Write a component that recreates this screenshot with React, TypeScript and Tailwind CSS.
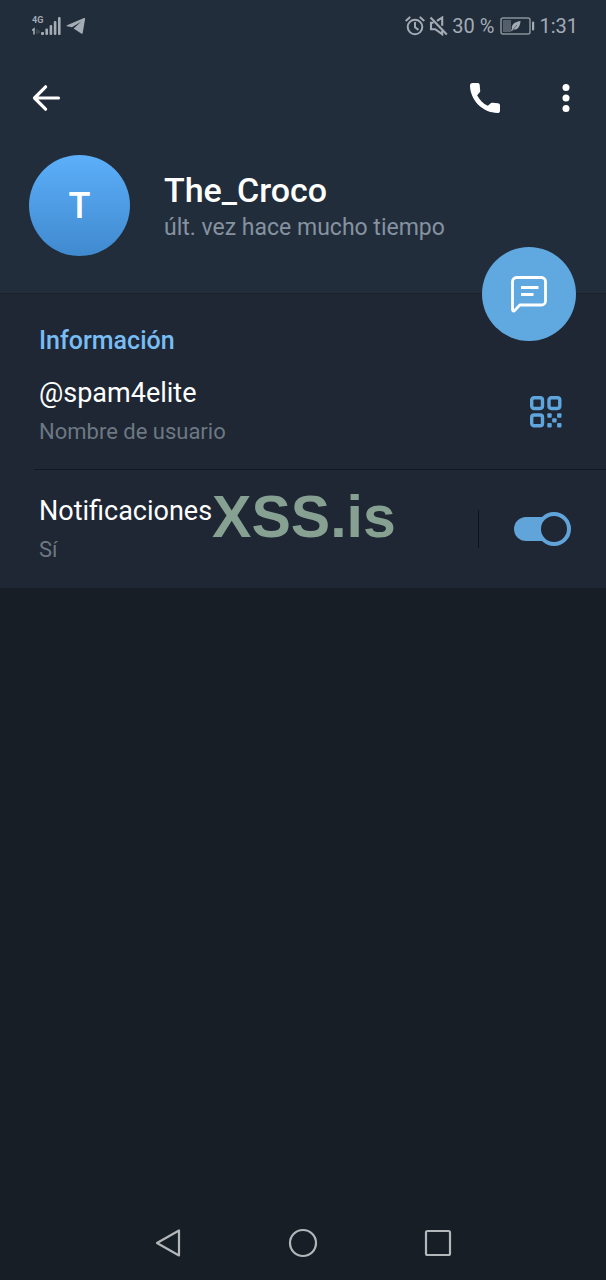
import React, { useState } from "react";

/* ------------------------------------------------------------------ */
/*  Status bar                                                          */
/* ------------------------------------------------------------------ */
function SignalIcon() {
  return (
    <svg width="30" height="20" viewBox="2 0 30 20" fill="none" aria-hidden="true">
      <g fill="currentColor">
        <rect x="11" y="16" width="3" height="3" rx="1" />
        <rect x="15.4" y="12.5" width="2.6" height="6.5" rx="1" />
        <rect x="19.6" y="9" width="2.6" height="10" rx="1" />
        <rect x="23.8" y="5" width="2.6" height="14" rx="1" />
        <rect x="28" y="1" width="2.6" height="18" rx="1" />
      </g>
      <path d="M2 14.400l2-1.600v5.800" stroke="currentColor" strokeWidth="1.600" />
      <path d="M7 13v5M9 14.500v2.500" stroke="currentColor" strokeWidth="1" opacity=".4" />
    </svg>
  );
}

function TelegramIcon() {
  return (
    <svg width="20" height="18" viewBox="0 0 20 18" aria-hidden="true">
      <path
        fill="currentColor"
        d="M1 8.2 18 1c.8-.3 1.2.1 1.1.9l-2.400 14c-.2.9-.8 1.1-1.500.6l-7.600-5L15 4.800 6 10.300 1 9.200c-.7-.2-.7-.7 0-1z"
      />
    </svg>
  );
}

function AlarmIcon() {
  return (
    <svg width="20" height="20" viewBox="0 0 20 20" fill="none" stroke="currentColor" strokeWidth="2" strokeLinecap="round" aria-hidden="true">
      <circle cx="10" cy="11" r="7.300" />
      <path d="M10 6.800V11.200l2.800 2.200M1.300 4.400 4.600 1.400M18.700 4.400 15.400 1.400" />
    </svg>
  );
}

function MutedIcon() {
  return (
    <svg width="19" height="20" viewBox="0 0 19 20" fill="none" stroke="currentColor" strokeWidth="2.100" aria-hidden="true">
      <path d="M1.500 1.500 17.800 18.500" />
      <path d="M4.600 6.800H2v6.400h4.200l7 5V14.500M8 4.800l5.200-3.300v8.300" />
    </svg>
  );
}

function BatteryIcon() {
  return (
    <svg width="35" height="18" viewBox="0 0 35 18" aria-hidden="true">
      <rect x="1" y="1" width="29" height="16" rx="2" fill="none" stroke="currentColor" strokeWidth="1.500" opacity=".8" />
      <rect x="3" y="3" width="8" height="12" fill="currentColor" opacity=".4" />
      <rect x="32" y="4.500" width="2.200" height="9" rx="1" fill="currentColor" />
      <path d="M20.500 4c-5 .8-9.200 3-8.600 7.600L11 14l1.300-.2.900-1.300c4.600.8 6.900-3 7.300-8.500z" fill="currentColor" />
      <path d="M13.200 12.200 17 8" stroke="#222d3a" strokeWidth=".5" />
    </svg>
  );
}

function StatusBar() {
  return (
    <div className="flex h-[52px] items-center justify-between pr-7 pl-8 text-xl text-[#a3abb5]">
      <div className="flex items-center gap-1">
        <span className="relative flex">
          <SignalIcon />
          <span className="absolute top-0 left-0 text-[9px] leading-[8px] font-bold">4G</span>
        </span>
        <TelegramIcon />
      </div>
      <div className="flex items-center gap-1">
        <AlarmIcon />
        <MutedIcon />
        <span className="pr-0.5">30 %</span>
        <BatteryIcon />
        <span>1:31</span>
      </div>
    </div>
  );
}

/* ------------------------------------------------------------------ */
/*  Profile header                                                      */
/* ------------------------------------------------------------------ */
function Toolbar() {
  return (
    <div className="flex h-[92px] items-center justify-between pr-5 pl-6 text-white">
      <button type="button" aria-label="Atrás" className="flex size-11 items-center justify-center">
        <svg width="30" height="30" viewBox="0 0 30 30" fill="none" stroke="currentColor" strokeWidth="3.200" strokeLinecap="round" strokeLinejoin="round" aria-hidden="true">
          <path d="M27.500 15H4M14.600 3.800 3.500 15l11.100 11.200" />
        </svg>
      </button>
      <div className="flex items-center gap-[39px]">
        <button type="button" aria-label="Llamar" className="flex size-11 items-center justify-center">
          <svg width="40" height="40" viewBox="0 0 24 24" fill="currentColor" aria-hidden="true">
            <path d="M3 4.400C3 3.600 3.600 3 4.400 3h3.100c.7 0 1.200.4 1.300 1.100l.3 3.400c.1.500-.1 1-.5 1.400L7.300 10.300c1.400 2.700 3.600 5 6.400 6.400l1.400-1.300c.4-.4.9-.6 1.400-.5l3.300.3c.7.1 1.200.6 1.200 1.300v3.100c0 .8-.6 1.400-1.400 1.400C10.700 21 3 13.300 3 4.400z" />
          </svg>
        </button>
        <button type="button" aria-label="Más opciones" className="flex h-11 w-10 items-center justify-center">
          <svg width="8" height="28" viewBox="0 0 8 28" fill="currentColor" aria-hidden="true">
            <circle cx="4" cy="3.500" r="3.500" />
            <circle cx="4" cy="14" r="3.500" />
            <circle cx="4" cy="24.500" r="3.500" />
          </svg>
        </button>
      </div>
    </div>
  );
}

function ProfileHeader() {
  return (
    <header className="relative border-b border-[#19212a] bg-[#222d3b]">
      <StatusBar />
      <Toolbar />
      <div className="flex items-start gap-[34px] px-[29px] pt-[11px] pb-[37px]">
        <div className="flex size-[101px] shrink-0 items-center justify-center rounded-full bg-linear-to-b from-[#5caffa] to-[#408acf] text-4xl font-medium text-white">
          T
        </div>
        <div className="min-w-0 pt-[15px]">
          <h1 className="truncate text-[34px] leading-10 font-medium text-white">The_Croco</h1>
          <p className="truncate text-[23px] leading-9 text-[#8592a0]">últ. vez hace mucho tiempo</p>
        </div>
      </div>
      <button
        type="button"
        aria-label="Enviar mensaje"
        className="absolute right-[30px] -bottom-12 flex size-[94px] items-center justify-center rounded-full bg-[#60a8e0] text-white"
      >
        <svg width="38" height="38" viewBox="0 0 38 38" fill="none" stroke="currentColor" strokeWidth="2.800" strokeLinecap="round" strokeLinejoin="round" aria-hidden="true">
          <path d="M6.500 2.500h25a4 4 0 0 1 4 4v19.500a4 4 0 0 1-4 4H9.800l-5.200 5.600c-.9.900-2.100.500-2.100-.800V6.500a4 4 0 0 1 4-4z" />
          <path d="M11 12.500h17.500M11 19.500h12.500" strokeLinecap="butt" />
        </svg>
      </button>
    </header>
  );
}

/* ------------------------------------------------------------------ */
/*  Info section                                                        */
/* ------------------------------------------------------------------ */
function QrIcon() {
  return (
    <svg width="32" height="32" viewBox="0 0 32 32" aria-hidden="true">
      <g fill="none" stroke="currentColor" strokeWidth="3.400">
        <rect x="1.700" y="1.700" width="10.800" height="10.800" rx="2.400" />
        <rect x="19" y="1.700" width="10.800" height="10.800" rx="2.400" />
        <rect x="1.700" y="19" width="10.800" height="10.800" rx="2.400" />
      </g>
      <g fill="currentColor">
        <rect x="17.300" y="17.300" width="4.400" height="4.400" rx="1" />
        <rect x="27.100" y="17.300" width="4.400" height="4.400" rx="1" />
        <rect x="22.200" y="22.200" width="4.400" height="4.400" rx="1" />
        <rect x="17.300" y="27.100" width="4.400" height="4.400" rx="1" />
        <rect x="27.100" y="27.100" width="4.400" height="4.400" rx="1" />
      </g>
    </svg>
  );
}

interface RowTextProps {
  title: React.ReactNode;
  subtitle: string;
}

function RowText({ title, subtitle }: RowTextProps) {
  return (
    <div>
      <div className="text-[27px] leading-[38px] text-white">{title}</div>
      <div className="text-[22px] leading-10 text-[#6d7883]">{subtitle}</div>
    </div>
  );
}

function InfoSection() {
  const [notifications, setNotifications] = useState(true);

  return (
    <section className="bg-[#1e2733] pt-[31px]">
      <h2 className="px-[39px] text-[25px] leading-8 font-medium text-[#79bdf5]">Información</h2>

      <div className="flex items-center justify-between pt-[17px] pr-11 pb-[17px] pl-[39px]">
        <RowText title="@spam4elite" subtitle="Nombre de usuario" />
        <button type="button" aria-label="Código QR" className="pb-0.5 text-[#5fa6df]">
          <QrIcon />
        </button>
      </div>

      <div className="ml-[34px] h-px bg-[#10171e]" />

      <div className="flex items-center justify-between pt-[22px] pr-[35px] pb-[18px] pl-[39px]">
        <RowText
          title={
            <span className="relative">
              <label htmlFor="notifications">Notificaciones</label>
              {/* Watermark */}
              <span className="pointer-events-none absolute top-1/2 left-full -translate-y-1/2 pt-3 font-['Liberation_Sans',sans-serif] text-[59px] leading-none font-bold text-[#86a191]">
                XSS.is
              </span>
            </span>
          }
          subtitle="Sí"
        />
        <div className="flex items-center gap-[35px] pb-1">
          <span className="h-[38px] w-px bg-[#0d1319]" />
          <span className="relative flex h-[34px] w-[57px] items-center">
            <input
              id="notifications"
              type="checkbox"
              role="switch"
              checked={notifications}
              onChange={(e) => setNotifications(e.target.checked)}
              className="peer h-6 w-12 cursor-pointer appearance-none rounded-full bg-[#4b5661] checked:bg-[#60a4da]"
            />
            <span className="pointer-events-none absolute top-0 left-0 size-[34px] rounded-full border-4 border-[#4b5661] bg-[#1e2733] peer-checked:right-0 peer-checked:left-auto peer-checked:border-[#60a4da]" />
          </span>
        </div>
      </div>
    </section>
  );
}

/* ------------------------------------------------------------------ */
/*  System navigation                                                   */
/* ------------------------------------------------------------------ */
function NavBar() {
  return (
    <nav className="flex h-[74px] items-center justify-center gap-[105px] text-[#b4b7ba]">
      <button type="button" aria-label="Volver">
        <svg width="30" height="30" viewBox="0 0 30 30" fill="none" stroke="currentColor" strokeWidth="2.200" strokeLinejoin="round" aria-hidden="true">
          <path d="M26 2.500v25L4 15z" />
        </svg>
      </button>
      <button type="button" aria-label="Inicio">
        <svg width="30" height="30" viewBox="0 0 30 30" fill="none" stroke="currentColor" strokeWidth="2.200" aria-hidden="true">
          <circle cx="15" cy="15" r="13" />
        </svg>
      </button>
      <button type="button" aria-label="Recientes">
        <svg width="30" height="30" viewBox="0 0 30 30" fill="none" stroke="currentColor" strokeWidth="2.200" aria-hidden="true">
          <rect x="3" y="3" width="24" height="24" rx="1.500" />
        </svg>
      </button>
    </nav>
  );
}

export default function App() {
  return (
    <div className="flex min-h-screen flex-col bg-[#171e26] font-[Roboto,sans-serif]">
      <ProfileHeader />
      <main className="flex-1">
        <InfoSection />
      </main>
      <NavBar />
    </div>
  );
}
